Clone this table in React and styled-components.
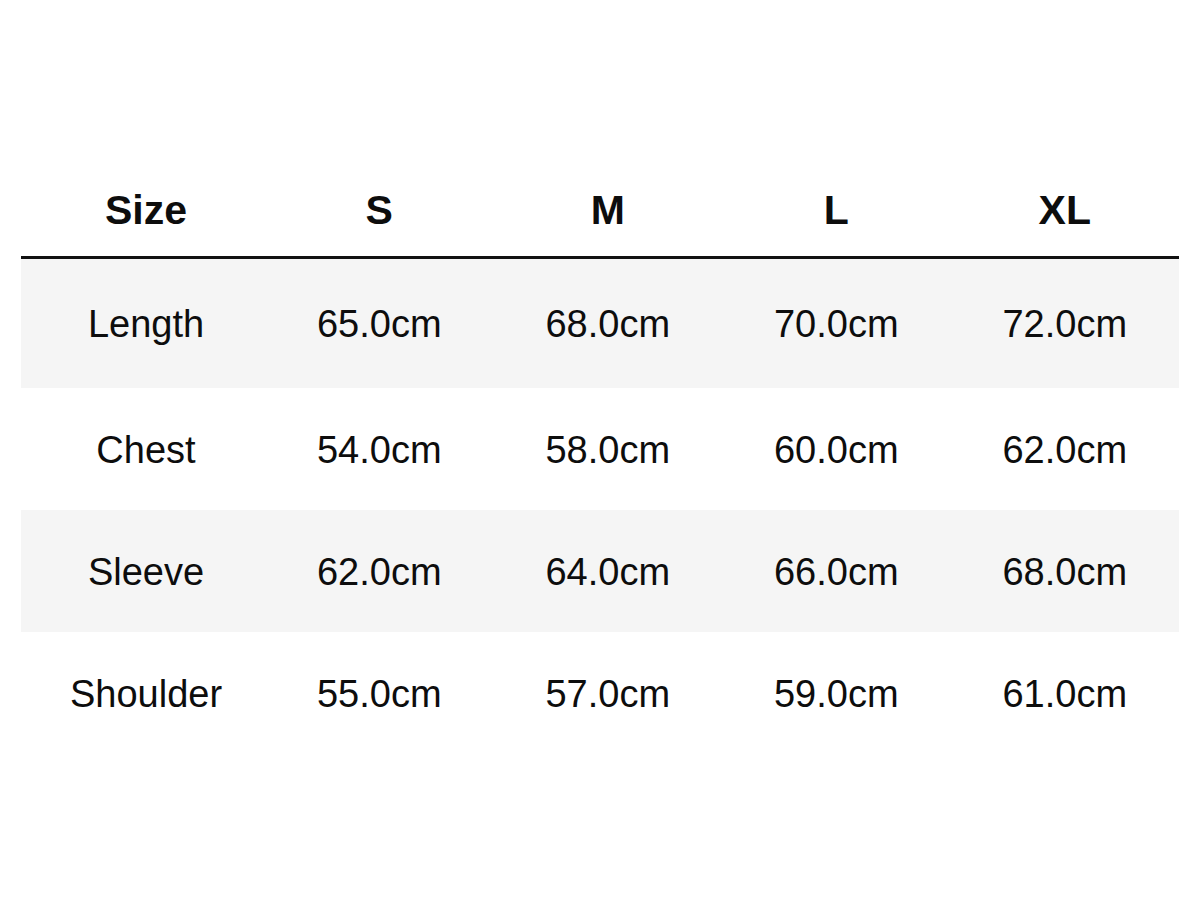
import styled, { createGlobalStyle } from "styled-components";

const GlobalStyle = createGlobalStyle`
  body {
    margin: 0;
    background: #ffffff;
    font-family: "Liberation Sans", Arial, sans-serif;
    color: #0d0d0d;
  }
`;

const Page = styled.main`
  width: 1200px;
  height: 900px;
  box-sizing: border-box;
  padding: 160px 21px 0 21px;
`;

const Grid = styled.div`
  display: grid;
  grid-template-columns: 244px repeat(4, 1fr);
`;

const Row = styled.div`
  display: contents;
`;

const HeadCell = styled.div`
  height: 99px;
  box-sizing: border-box;
  display: flex;
  align-items: center;
  justify-content: center;
  padding-top: 5px;
  padding-left: ${(p) => (p.$first ? "6px" : "0")};
  font-size: 41px;
  font-weight: 700;
  border-bottom: 3px solid #111111;
`;

const Cell = styled.div`
  height: ${(p) => p.$h}px;
  box-sizing: border-box;
  display: flex;
  align-items: center;
  justify-content: center;
  padding-top: 2px;
  padding-left: ${(p) => (p.$first ? "6px" : "0")};
  font-size: 38px;
  background: ${(p) => (p.$shaded ? "#f5f5f5" : "#ffffff")};
`;

const sizes = ["S", "M", "L", "XL"];

const rows = [
  { label: "Length", values: ["65.0cm", "68.0cm", "70.0cm", "72.0cm"], h: 129 },
  { label: "Chest", values: ["54.0cm", "58.0cm", "60.0cm", "62.0cm"], h: 122 },
  { label: "Sleeve", values: ["62.0cm", "64.0cm", "66.0cm", "68.0cm"], h: 122 },
  { label: "Shoulder", values: ["55.0cm", "57.0cm", "59.0cm", "61.0cm"], h: 122 },
];

const App = () => {
  return (
    <>
      <GlobalStyle />
      <Page>
        <Grid>
          <Row>
            <HeadCell $first>Size</HeadCell>
            {sizes.map((s) => (
              <HeadCell key={s}>{s}</HeadCell>
            ))}
          </Row>
          {rows.map((row, i) => (
            <Row key={row.label}>
              <Cell $first $shaded={i % 2 === 0} $h={row.h}>
                {row.label}
              </Cell>
              {row.values.map((v, j) => (
                <Cell key={j} $shaded={i % 2 === 0} $h={row.h}>
                  {v}
                </Cell>
              ))}
            </Row>
          ))}
        </Grid>
      </Page>
    </>
  );
};

export default App;
